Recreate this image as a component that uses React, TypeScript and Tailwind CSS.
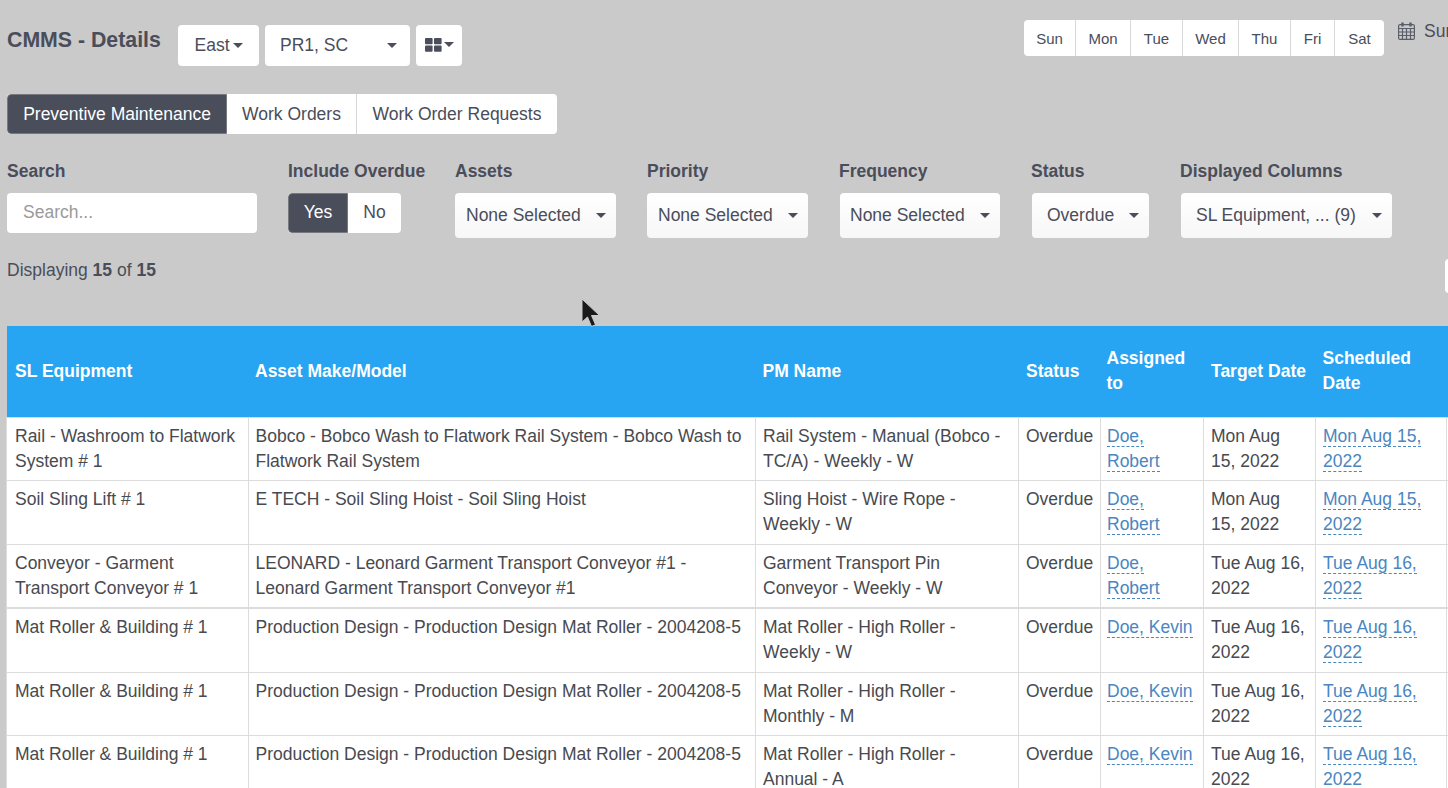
const DAYS = [
  { label: 'Sun', w: 'w-[52px]' },
  { label: 'Mon', w: 'w-[55px]' },
  { label: 'Tue', w: 'w-[52px]' },
  { label: 'Wed', w: 'w-[56px]' },
  { label: 'Thu', w: 'w-[52px]' },
  { label: 'Fri', w: 'w-[44px]' },
  { label: 'Sat', w: 'w-[49px]' },
];

const ROWS = [
  {
    equipment: 'Rail - Washroom to Flatwork System # 1',
    make: 'Bobco - Bobco Wash to Flatwork Rail System - Bobco Wash to Flatwork Rail System',
    pm: 'Rail System - Manual (Bobco - TC/A) - Weekly - W',
    assigned: 'Doe, Robert',
    target: 'Mon Aug 15, 2022',
    h: 'h-[63px]',
  },
  {
    equipment: 'Soil Sling Lift # 1',
    make: 'E TECH - Soil Sling Hoist - Soil Sling Hoist',
    pm: 'Sling Hoist - Wire Rope - Weekly - W',
    assigned: 'Doe, Robert',
    target: 'Mon Aug 15, 2022',
    h: 'h-[64px]',
  },
  {
    equipment: 'Conveyor - Garment Transport Conveyor # 1',
    make: 'LEONARD - Leonard Garment Transport Conveyor #1 - Leonard Garment Transport Conveyor #1',
    pm: 'Garment Transport Pin Conveyor - Weekly - W',
    assigned: 'Doe, Robert',
    target: 'Tue Aug 16, 2022',
    h: 'h-[64px] [&>td]:border-b-2',
  },
  {
    equipment: 'Mat Roller & Building # 1',
    make: 'Production Design - Production Design Mat Roller - 2004208-5',
    pm: 'Mat Roller - High Roller - Weekly - W',
    assigned: 'Doe, Kevin',
    target: 'Tue Aug 16, 2022',
    h: 'h-[64px]',
  },
  {
    equipment: 'Mat Roller & Building # 1',
    make: 'Production Design - Production Design Mat Roller - 2004208-5',
    pm: 'Mat Roller - High Roller - Monthly - M',
    assigned: 'Doe, Kevin',
    target: 'Tue Aug 16, 2022',
    h: 'h-[63px]',
  },
  {
    equipment: 'Mat Roller & Building # 1',
    make: 'Production Design - Production Design Mat Roller - 2004208-5',
    pm: 'Mat Roller - High Roller - Annual - A',
    assigned: 'Doe, Kevin',
    target: 'Tue Aug 16, 2022',
    h: 'h-[64px]',
  },
];

function Caret({ className = '' }: { className?: string }) {
  return <span className={`inline-block border-x-[5px] border-t-[5px] border-x-transparent border-t-[#4a4d5a] ${className}`} />;
}

function FilterSelect({ label, value, box, labelClass = '', pad = 'pl-[11px]' }: { label: string; value: string; box: string; labelClass?: string; pad?: string }) {
  return (
    <div className={`flex-none ${box}`}>
      <div className={`font-bold leading-[25px] mb-[9px] pt-px -mt-px ${labelClass}`}>{label}</div>
      <div className={`h-[45px] rounded bg-gradient-to-b from-white to-[#f7f7f7] flex items-center justify-between pr-[10.5px] text-[#4a4d5a] ${pad}`}>
        <span className="whitespace-nowrap">{value}</span>
        <Caret />
      </div>
    </div>
  );
}

function Dashed({ text }: { text: string }) {
  return <span className="text-[#4a86c0] border-b border-dashed border-[#4a86c0]">{text}</span>;
}

export default function App() {
  return (
    <div className="relative w-[1448px] h-[788px] overflow-hidden bg-[#cacaca] text-[17.5px] leading-[25px] text-[#4a4d5a] font-['Liberation_Sans',Arial,sans-serif]">
      {/* Header */}
      <div className="flex items-start pl-[7px] h-[94px]">
        <h1 className="flex-none w-[171px] mt-[27px] text-[21.3px] font-bold leading-[26px] whitespace-nowrap">CMMS - Details</h1>
        <div className="flex-none flex gap-[6px] mt-[25px]">
          <div className="h-[41px] w-[81px] bg-white rounded flex items-center justify-center gap-[3px]">
            East <Caret />
          </div>
          <div className="h-[41px] w-[145px] bg-white rounded flex items-center justify-between pl-[15px] pr-[13px]">
            PR1, SC <Caret />
          </div>
          <div className="h-[41px] w-[46px] bg-white rounded flex items-center justify-center gap-[2px] pb-[2px]">
            <svg width="17" height="14" viewBox="0 0 17 14" fill="#4a4d5a">
              <rect x="0" y="0" width="7.6" height="6.2" rx="1" />
              <rect x="9" y="0" width="7.6" height="6.2" rx="1" />
              <rect x="0" y="7.6" width="7.6" height="6.2" rx="1" />
              <rect x="9" y="7.6" width="7.6" height="6.2" rx="1" />
            </svg>
            <Caret />
          </div>
        </div>
        <div className="flex-none flex ml-[562px] mt-[20px] h-[36px] bg-white rounded text-[15px] divide-x divide-[#d8d8d8]">
          {DAYS.map(d => (
            <div key={d.label} className={`${d.w} flex-none flex items-center justify-center`}>{d.label}</div>
          ))}
        </div>
        <div className="flex-none flex items-center gap-[9px] ml-[14px] mt-[19px] h-[24px] whitespace-nowrap">
          <svg width="17" height="18" viewBox="0 0 17 18" fill="none" stroke="#5a5d6a" strokeWidth="1.2">
            <rect x="0.6" y="2.6" width="15.8" height="14.8" rx="1.5" />
            <path d="M0.6 6.5h15.8M0.6 10h15.8M0.6 13.5h15.8M4.5 6.5v11M8.5 6.5v11M12.5 6.5v11" />
            <path d="M4.5 0.5v4M12.5 0.5v4" strokeWidth="2.4" />
          </svg>
          Sun
        </div>
      </div>

      {/* Tabs */}
      <div className="ml-[7px] flex w-[550px] h-[40px] rounded bg-white overflow-hidden divide-x divide-[#d8d8d8]">
        <div className="w-[220px] flex-none flex items-center justify-center bg-[#4a4d5a] text-white rounded-l border border-[#77797f]">Preventive Maintenance</div>
        <div className="w-[130px] flex-none flex items-center justify-center">Work Orders</div>
        <div className="flex-1 flex items-center justify-center">Work Order Requests</div>
      </div>

      {/* Filters */}
      <div className="flex items-start pl-[7px] mt-[25px] h-[98px]">
        <div className="flex-none w-[250px]">
          <div className="font-bold mb-[9px] pt-px -mt-px">Search</div>
          <div className="h-[40px] bg-white rounded flex items-center pl-[16px] pb-[2px] text-[#9a9a9a]">Search...</div>
        </div>
        <div className="flex-none w-[137px] ml-[31px]">
          <div className="font-bold mb-[9px] pt-px -mt-px whitespace-nowrap">Include Overdue</div>
          <div className="flex w-[113px] h-[40px] rounded bg-white overflow-hidden">
            <div className="w-[60px] flex items-center justify-center bg-[#4a4d5a] text-white pb-[2px] rounded-l border border-[#77797f]">Yes</div>
            <div className="flex-1 flex items-center justify-center pb-[2px]">No</div>
          </div>
        </div>
        <FilterSelect label="Assets" value="None Selected" box="w-[161px] ml-[30px]" />
        <FilterSelect label="Priority" value="None Selected" box="w-[161px] ml-[31px]" />
        <FilterSelect label="Frequency" value="None Selected" box="w-[160px] ml-[32px]" labelClass="-ml-px" pad="pl-[10px]" />
        <FilterSelect label="Status" value="Overdue" box="w-[117px] ml-[32px]" labelClass="-ml-px" pad="pl-[15px]" />
        <FilterSelect label="Displayed Columns" value="SL Equipment, ... (9)" box="w-[211px] ml-[32px]" labelClass="-ml-px" pad="pl-[15px]" />
      </div>

      {/* Count */}
      <div className="relative pl-[7px] h-[69px] pt-[1px]">
        Displaying <b>15</b> of <b>15</b>
        <div className="absolute left-[1445px] top-[2px] w-[40px] h-[34px] bg-white rounded" />
      </div>

      {/* Table */}
      <table className="ml-[6px] table-fixed border-collapse w-[1560px]">
        <colgroup>
          <col className="w-[242px]" />
          <col className="w-[507px]" />
          <col className="w-[263px]" />
          <col className="w-[82px]" />
          <col className="w-[103px]" />
          <col className="w-[112px]" />
          <col className="w-[131px]" />
          <col />
        </colgroup>
        <thead>
          <tr className="h-[91px] bg-[#27a4f2] text-white font-bold text-left [&>th]:font-bold [&>th]:pl-[7px] [&>th]:pr-[7px]">
            <th className="first:pl-[8.5px]">SL Equipment</th>
            <th className="!pl-[6.5px]">Asset Make/Model</th>
            <th>PM Name</th>
            <th className="!pl-[7.5px]">Status</th>
            <th className="!pl-[6px]">Assigned to</th>
            <th className="!pl-[7.5px]">Target Date</th>
            <th>Scheduled Date</th>
            <th />
          </tr>
        </thead>
        <tbody className="bg-white text-[#484a50]">
          {ROWS.map((r, i) => (
            <tr key={i} className={`${r.h} align-top [&>td]:border [&>td]:border-[#dcdcdc] [&>td]:pl-[7px] [&>td]:pr-[7px] [&>td]:pt-[6px] [&>td]:pb-[6px]`}>
              <td className="first:pl-[8px]">{r.equipment}</td>
              <td className="!pl-[6.5px]">{r.make}</td>
              <td>{r.pm}</td>
              <td className="border-l-2 border-r-2">Overdue</td>
              <td className="!pl-[6px]"><Dashed text={r.assigned} /></td>
              <td>{r.target}</td>
              <td><Dashed text={r.target} /></td>
              <td />
            </tr>
          ))}
        </tbody>
      </table>

      {/* Cursor */}
      <svg className="absolute left-[581px] top-[298px]" width="20" height="31" viewBox="0 0 20 31">
        <path d="M1 1v23l5.5-5 4 9.5 4-1.8-4-9.2h8z" fill="#1a1a1a" stroke="#cacaca" strokeWidth="1" />
      </svg>
    </div>
  );
}
